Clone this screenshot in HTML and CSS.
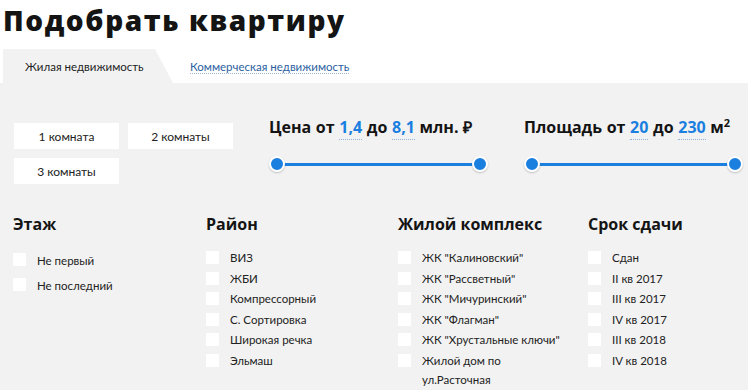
FILE: index.html
```html
<!DOCTYPE html>
<html lang="ru">
<head>
<meta charset="utf-8">
<link rel="stylesheet" href="styles.css">
</head>
<body>
<h1 class="title">Подобрать квартиру</h1>
<div class="tabs">
  <div class="tab tab-active">Жилая недвижимость</div>
  <a class="tab tab-link" href="#">Коммерческая недвижимость</a>
</div>
<div class="panel">
  <div class="top">
    <div class="rooms">
      <div class="room">1 комната</div>
      <div class="room">2 комнаты</div>
      <div class="room">3 комнаты</div>
    </div>
    <div class="range range-price">
      <div class="range-title">Цена от <span class="val">1,4</span> до <span class="val">8,1</span> млн. ₽</div>
      <div class="slider"><span class="knob"></span><span class="track"></span><span class="knob"></span></div>
    </div>
    <div class="range range-area">
      <div class="range-title">Площадь от <span class="val">20</span> до <span class="val">230</span> м<sup class="sup">2</sup></div>
      <div class="slider"><span class="knob"></span><span class="track"></span><span class="knob"></span></div>
    </div>
  </div>
  <div class="filters">
    <div class="col">
      <div class="col-title">Этаж</div>
      <div class="list list-wide">
        <div class="item"><span class="box"></span><span class="label">Не первый</span></div>
        <div class="item"><span class="box"></span><span class="label">Не последний</span></div>
      </div>
    </div>
    <div class="col">
      <div class="col-title">Район</div>
      <div class="list">
        <div class="item"><span class="box"></span><span class="label">ВИЗ</span></div>
        <div class="item"><span class="box"></span><span class="label">ЖБИ</span></div>
        <div class="item"><span class="box"></span><span class="label">Компрессорный</span></div>
        <div class="item"><span class="box"></span><span class="label">С. Сортировка</span></div>
        <div class="item"><span class="box"></span><span class="label">Широкая речка</span></div>
        <div class="item"><span class="box"></span><span class="label">Эльмаш</span></div>
      </div>
    </div>
    <div class="col">
      <div class="col-title">Жилой комплекс</div>
      <div class="list">
        <div class="item"><span class="box"></span><span class="label">ЖК "Калиновский"</span></div>
        <div class="item"><span class="box"></span><span class="label">ЖК "Рассветный"</span></div>
        <div class="item"><span class="box"></span><span class="label">ЖК "Мичуринский"</span></div>
        <div class="item"><span class="box"></span><span class="label">ЖК "Флагман"</span></div>
        <div class="item"><span class="box"></span><span class="label">ЖК "Хрустальные ключи"</span></div>
        <div class="item"><span class="box"></span><span class="label label-narrow">Жилой дом по ул.Расточная</span></div>
      </div>
    </div>
    <div class="col">
      <div class="col-title">Срок сдачи</div>
      <div class="list">
        <div class="item"><span class="box"></span><span class="label">Сдан</span></div>
        <div class="item"><span class="box"></span><span class="label">II кв 2017</span></div>
        <div class="item"><span class="box"></span><span class="label">III кв 2017</span></div>
        <div class="item"><span class="box"></span><span class="label">IV кв 2017</span></div>
        <div class="item"><span class="box"></span><span class="label">III кв 2018</span></div>
        <div class="item"><span class="box"></span><span class="label">IV кв 2018</span></div>
      </div>
    </div>
  </div>
</div>
</body>
</html>
```
FILE: styles.css
```css
* { box-sizing: border-box; }
html, body { margin: 0; padding: 0; background: #fff; }
body {
  font-family: "Lato", "Liberation Sans", sans-serif;
  color: #1e1e1e;
  width: 748px;
  height: 390px;
  overflow: hidden;
}
.title {
  margin: 0;
  padding: 2px 0 0 3px;
  height: 49px;
  font-family: "Open Sans", "Liberation Sans", sans-serif;
  font-size: 28px;
  line-height: 36px;
  font-weight: 800;
  color: #141414;
  letter-spacing: 1.6px;
}
.tabs {
  display: flex;
  align-items: stretch;
  height: 34px;
  padding-left: 3px;
}
.tab {
  display: flex;
  align-items: center;
  font-size: 11.5px;
}
.tab-active {
  width: 170px;
  padding-left: 22px;
  background: #f2f2f2;
  color: #222;
  clip-path: polygon(0 0, 152px 0, 100% 100%, 0 100%);
}
.tab-link {
  margin-left: 17px;
  color: #2c5f9f;
  text-decoration: none;
  background-image: linear-gradient(to right, #9db6d3 50%, transparent 50%);
  background-size: 2px 1px;
  background-repeat: repeat-x;
  background-position: 0 24px;
  height: 100%;
}
.panel {
  background: #f2f2f2;
  height: 307px;
  padding: 40px 0 0 14px;
}
.top {
  display: flex;
  align-items: flex-start;
  height: 90px;
}
.rooms {
  display: grid;
  grid-template-columns: 105px 105px;
  grid-auto-rows: 26px;
  gap: 9px;
}
.room {
  background: #fff;
  font-size: 12px;
  color: #222;
  display: flex;
  align-items: center;
  justify-content: center;
}
.range {
  margin-top: -6px;
  width: 220px;
}
.range-price { margin-left: 36px; }
.range-area { margin-left: 35px; }
.range-title {
  font-family: "Open Sans", "Liberation Sans", sans-serif;
  font-size: 16px;
  font-weight: 700;
  line-height: 20px;
  color: #141414;
  white-space: nowrap;
  word-spacing: 0.5px;
}
.val {
  color: #1b7fe0;
  border-bottom: 1px dotted #8fb3d8;
  padding-bottom: 1px;
}
.sup {
  font-size: 11px;
  vertical-align: 6px;
  line-height: 0;
}
.slider {
  display: flex;
  align-items: center;
  margin-top: 19px;
  width: 219px;
}
.track {
  flex: 1;
  height: 3px;
  background: #1b7fe0;
  margin: 0 -2px;
}
.knob {
  width: 16px;
  height: 16px;
  border-radius: 50%;
  background: #1b7fe0;
  border: 2px solid #fff;
  box-shadow: 0 1px 2px rgba(0,0,0,0.2);
  position: relative;
  z-index: 1;
}
.filters {
  display: grid;
  grid-template-columns: 193px 192px 190px 1fr;
  margin-left: -1px;
}
.col-title {
  font-family: "Open Sans", "Liberation Sans", sans-serif;
  font-size: 16px;
  font-weight: 700;
  line-height: 22px;
  color: #141414;
  margin-bottom: 13px;
}
.list {
  display: flex;
  flex-direction: column;
}
.item {
  display: flex;
  align-items: flex-start;
  font-size: 11.5px;
  line-height: 20.5px;
  color: #222;
}
.list-wide .item { line-height: 25px; }
.box {
  width: 13px;
  height: 13px;
  background: #fff;
  margin-top: 3px;
  margin-right: 11px;
  flex: none;
}
.list-wide .box { margin-top: 5px; }
.label-narrow { max-width: 130px; line-height: 19px; }
```
